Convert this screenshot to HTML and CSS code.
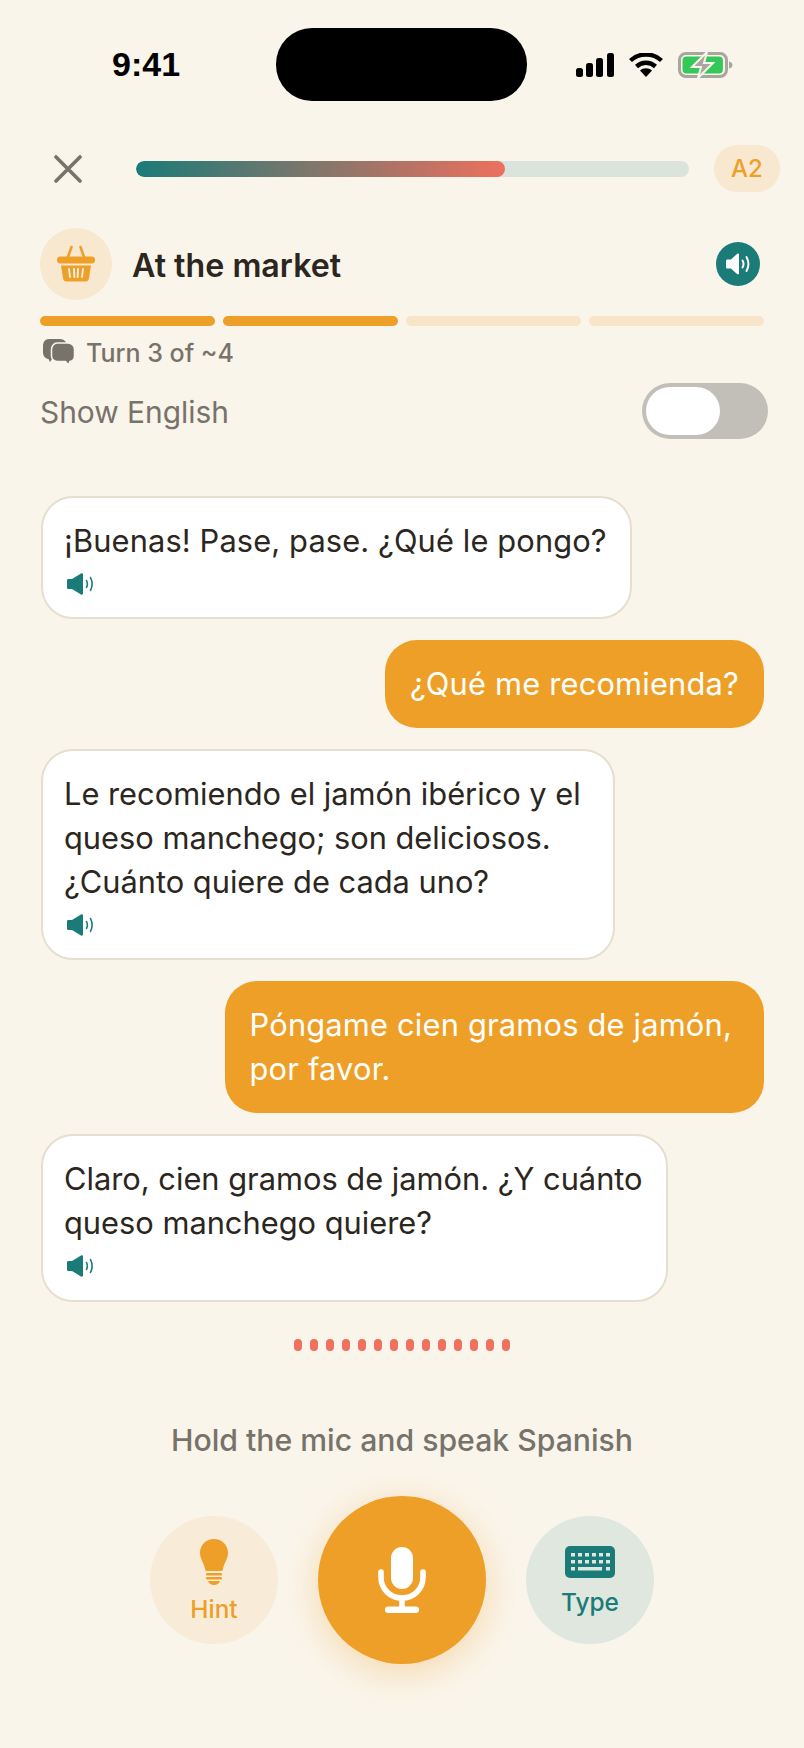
FILE: index.html
```html
<!DOCTYPE html>
<html lang="en">

<head>
    <meta charset="UTF-8">
    <meta name="viewport" content="width=device-width, initial-scale=1.0">
    <title>At the market</title>
    <link rel="stylesheet" href="styles.css">
</head>

<body>
    <div class="screen">

        <!-- status bar -->
        <div class="status">
            <span class="time">9:41</span>
            <div class="island"></div>
            <div class="status-icons">
                <svg width="38" height="24" viewBox="0 0 38 24">
                    <rect x="0" y="15" width="7" height="9" rx="2.5" />
                    <rect x="10" y="10" width="7" height="14" rx="2.5" />
                    <rect x="20" y="5" width="7" height="19" rx="2.5" />
                    <rect x="31" y="0" width="7" height="24" rx="2.5" />
                </svg>
                <svg width="34" height="24" viewBox="0 0 34 24">
                    <path d="M1.5 7.5C10 -0.5 24 -0.5 32.5 7.5" fill="none" stroke="#000" stroke-width="4.4" />
                    <path d="M7.5 13.5C13 8.5 21 8.5 26.5 13.5" fill="none" stroke="#000" stroke-width="4.4" />
                    <path d="M11 17.5C14.5 14.5 19.5 14.5 23 17.5L17 24Z" />
                </svg>
                <svg width="55" height="26" viewBox="0 0 55 26">
                    <rect x="1.5" y="1.5" width="47" height="23" rx="6.5" fill="none" stroke="#a9a6a0" stroke-width="3" />
                    <path d="M51 9.5C53.500 10 54.500 11.500 54.500 13S53.500 16 51 16.500Z" fill="#a9a6a0" />
                    <rect x="4.500" y="4.500" width="40.400" height="17" rx="4" fill="#34c759" />
                    <path d="M29 0 14 15H23L20 26 35 11H26Z" fill="#a9a6a0" stroke="#faf5eb" stroke-width="2" />
                </svg>
            </div>
        </div>

        <!-- lesson progress -->
        <div class="topbar">
            <svg class="close" width="28" height="28" viewBox="0 0 28 28">
                <path d="M2 2 26 26M26 2 2 26" fill="none" stroke="#77726a" stroke-width="3.600" stroke-linecap="round" />
            </svg>
            <div class="progress">
                <div class="progress-fill"></div>
            </div>
            <div class="level">A2</div>
        </div>

        <!-- scenario -->
        <div class="scene">
            <div class="scene-icon">
                <svg width="40" height="38" viewBox="0 0 40 38">
                    <path d="M11 15 15.500 2M29 15 24.500 2" fill="none" stroke="#ee9f27" stroke-width="2.600" stroke-linecap="round" />
                    <rect x="1" y="11.500" width="38" height="7" rx="3.500" fill="#ee9f27" />
                    <path d="M5 20.500H35L32.800 34C32.500 35.500 31.500 36.500 30 36.500H10C8.500 36.500 7.500 35.500 7.200 34Z" fill="#ee9f27" />
                    <path d="M13 24 14 32M18 24 18.400 32M22 24 21.600 32M27 24 26 32" fill="none" stroke="#faf5eb" stroke-width="1.800" stroke-linecap="round" />
                </svg>
            </div>
            <div class="scene-title">At the market</div>
            <div class="scene-sound">
                <svg width="25" height="22" viewBox="0 0 25 22">
                    <path d="M0 8C0 7 .7 6.500 1.500 6.500H5L11 1C12 .2 13 .7 13 2V20C13 21.300 12 21.800 11 21L5 15.500H1.500C.7 15.500 0 15 0 14Z" fill="#fff" />
                    <path d="M16.500 7.500C17.700 9.500 17.700 12.500 16.500 14.500M20.500 4C23 8.500 23 13.500 20.500 18" fill="none" stroke="#fff" stroke-width="2" stroke-linecap="round" />
                </svg>
            </div>
        </div>

        <div class="turns">
            <div class="turn turn-done"></div>
            <div class="turn turn-done"></div>
            <div class="turn"></div>
            <div class="turn"></div>
        </div>

        <div class="turn-label">
            <svg width="33" height="26" viewBox="0 0 33 26">
                <path d="M7 0H18C22 0 25 3 25 7V13C25 17 22 20 18 20H10L8 23 6.500 20C3 19.500 1 17 1 13V7C1 3 3 0 7 0Z" fill="#77726a" />
                <path d="M15 4H26C30 4 32.500 7 32.500 10.500V17C32.500 20.500 30.500 22 28 22.500L26.500 26 23.500 22.500H15C12 22.500 9.500 20 9.500 17V10.500C9.500 7 12 4 15 4Z" fill="#77726a" stroke="#faf5eb" stroke-width="1.500" />
            </svg>
            <span>Turn 3 of ~4</span>
        </div>

        <div class="english">
            <span>Show English</span>
            <div class="toggle">
                <div class="toggle-knob"></div>
            </div>
        </div>

        <!-- conversation -->
        <div class="chat">
            <div class="bubble bubble-bot bubble-first">
                <p>¡Buenas! Pase, pase. ¿Qué le pongo?</p>
                <svg class="bubble-sound" width="28" height="22" viewBox="0 0 28 22">
                    <path d="M1 7.500C1 6.500 1.500 6 2.500 6H6L15 .5C16 0 17 .5 17 1.500V20.500C17 21.500 16 22 15 21.500L6 16H2.500C1.500 16 1 15.500 1 14.500Z" fill="#1a7b78" />
                    <path d="M20.500 7.500C21.500 9.500 21.500 12.500 20.500 14.500M24.500 4.500C26.500 8.500 26.500 13.500 24.500 17.500" fill="none" stroke="#1a7b78" stroke-width="1.600" stroke-linecap="round" />
                </svg>
            </div>

            <div class="bubble bubble-user">
                <p>¿Qué me recomienda?</p>
            </div>

            <div class="bubble bubble-bot bubble-wrapped">
                <p>Le recomiendo el jamón ibérico y el<br>queso manchego; son deliciosos.<br>¿Cuánto quiere de cada uno?</p>
                <svg class="bubble-sound" width="28" height="22" viewBox="0 0 28 22">
                    <path d="M1 7.500C1 6.500 1.500 6 2.500 6H6L15 .5C16 0 17 .5 17 1.500V20.500C17 21.500 16 22 15 21.500L6 16H2.500C1.500 16 1 15.500 1 14.500Z" fill="#1a7b78" />
                    <path d="M20.500 7.500C21.500 9.500 21.500 12.500 20.500 14.500M24.500 4.500C26.500 8.500 26.500 13.500 24.500 17.500" fill="none" stroke="#1a7b78" stroke-width="1.600" stroke-linecap="round" />
                </svg>
            </div>

            <div class="bubble bubble-user bubble-wrapped">
                <p>Póngame cien gramos de jamón,<br>por favor.</p>
            </div>

            <div class="bubble bubble-bot bubble-last">
                <p>Claro, cien gramos de jamón. ¿Y cuánto<br>queso manchego quiere?</p>
                <svg class="bubble-sound" width="28" height="22" viewBox="0 0 28 22">
                    <path d="M1 7.500C1 6.500 1.500 6 2.500 6H6L15 .5C16 0 17 .5 17 1.500V20.500C17 21.500 16 22 15 21.500L6 16H2.500C1.500 16 1 15.500 1 14.500Z" fill="#1a7b78" />
                    <path d="M20.500 7.500C21.500 9.500 21.500 12.500 20.500 14.500M24.500 4.500C26.500 8.500 26.500 13.500 24.500 17.500" fill="none" stroke="#1a7b78" stroke-width="1.600" stroke-linecap="round" />
                </svg>
            </div>
        </div>

        <div class="dots">
            <i></i><i></i><i></i><i></i><i></i><i></i><i></i><i></i><i></i><i></i><i></i><i></i><i></i><i></i>
        </div>

        <div class="speak-hint">Hold the mic and speak Spanish</div>

        <!-- controls -->
        <div class="controls">
            <div class="side-btn side-hint">
                <svg width="28" height="46" viewBox="0 0 28 46">
                    <path d="M14 0C6 0 0 6 0 14C0 20 4 24 5 30C5.300 31.500 6 32 7 32H21C22 32 22.700 31.500 23 30C24 24 28 20 28 14C28 6 22 0 14 0Z" fill="#ee9f27" />
                    <rect x="6" y="34" width="16" height="2.500" rx="1.200" fill="#ee9f27" />
                    <rect x="6" y="38" width="16" height="2.500" rx="1.200" fill="#ee9f27" />
                    <path d="M8 42H20C19 44.500 17 46 14 46S9 44.500 8 42Z" fill="#ee9f27" />
                </svg>
                <span>Hint</span>
            </div>

            <div class="mic-btn">
                <svg width="48" height="66" viewBox="0 0 48 66">
                    <rect x="13" y="0" width="22" height="42" rx="11" fill="#fff" />
                    <path d="M3 25V30C3 42 12 51 24 51S45 42 45 30V25M24 51V61" fill="none" stroke="#fff" stroke-width="5.600" stroke-linecap="round" />
                    <rect x="7" y="59.500" width="34" height="6.500" rx="3.200" fill="#fff" />
                </svg>
            </div>

            <div class="side-btn side-type">
                <svg width="50" height="32" viewBox="0 0 50 32">
                    <rect width="50" height="32" rx="5" fill="#1a7b78" />
                    <g fill="#dfe7df">
                        <rect x="6" y="7" width="4" height="3.500" /><rect x="13" y="7" width="4" height="3.500" /><rect x="20" y="7" width="4" height="3.500" /><rect x="27" y="7" width="4" height="3.500" /><rect x="34" y="7" width="4" height="3.500" /><rect x="41" y="7" width="4" height="3.500" />
                        <rect x="6" y="14" width="4" height="3.500" /><rect x="13" y="14" width="4" height="3.500" /><rect x="20" y="14" width="4" height="3.500" /><rect x="27" y="14" width="4" height="3.500" /><rect x="34" y="14" width="4" height="3.500" /><rect x="41" y="14" width="4" height="3.500" />
                        <rect x="6" y="21" width="4" height="3.500" /><rect x="13" y="21" width="24" height="3.500" /><rect x="41" y="21" width="4" height="3.500" />
                    </g>
                </svg>
                <span>Type</span>
            </div>
        </div>

    </div>
</body>

</html>
```

FILE: styles.css
```css
* {
    padding: 0;
    margin: 0;
    box-sizing: border-box;
}

body {
    background-color: #faf5eb;
    font-family: "Inter", "Liberation Sans", sans-serif;
    color: #2b2620;
}

.screen {
    width: 804px;
    height: 1748px;
    padding: 0 40px;
    overflow: hidden;
}

.status {
    height: 145px;
    padding-top: 28px;
    margin: 0 -40px;
    display: flex;
    align-items: flex-start;
}

.time {
    width: 276px;
    padding: 17px 0 0 112px;
    font-family: "Liberation Sans", sans-serif;
    font-size: 34px;
    font-weight: 700;
    line-height: 38px;
    color: #000;
}

.island {
    width: 251px;
    height: 73px;
    border-radius: 36px;
    background-color: #000;
}

.status-icons {
    padding: 24px 0 0 49px;
    display: flex;
    align-items: center;
    gap: 15px;
}

.topbar {
    height: 47px;
    margin-right: -16px;
    display: flex;
    align-items: center;
}

.close {
    margin-left: 14px;
    margin-right: 54px;
    flex-shrink: 0;
}

.progress {
    width: 553px;
    height: 16px;
    border-radius: 8px;
    background-color: #dbe4dc;
    overflow: hidden;
}

.progress-fill {
    width: 369px;
    height: 100%;
    border-radius: 8px;
    background: linear-gradient(90deg, #1a7b78, #ee705e);
}

.level {
    width: 66px;
    height: 47px;
    margin-left: 25px;
    border-radius: 23px;
    background-color: #f8e8d0;
    color: #ee9f27;
    font-size: 24px;
    font-weight: 500;
    line-height: 47px;
    text-align: center;
}

.scene {
    height: 72px;
    margin-top: 36px;
    display: flex;
    align-items: center;
}

.scene-icon {
    width: 72px;
    height: 72px;
    border-radius: 50%;
    background-color: #f8e8d0;
    display: flex;
    align-items: center;
    justify-content: center;
}

.scene-title {
    margin-left: 20px;
    padding-top: 2px;
    font-size: 32.2px;
    font-weight: 600;
    flex: 1;
}

.scene-sound {
    width: 44px;
    height: 44px;
    margin-right: 4px;
    border-radius: 50%;
    background-color: #1a7b78;
    display: flex;
    align-items: center;
    justify-content: center;
}

.turns {
    margin-top: 16px;
    display: flex;
    gap: 8px;
}

.turn {
    height: 10px;
    flex: 1;
    border-radius: 5px;
    background-color: #f8e4c8;
}

.turn-done {
    background-color: #ee9f27;
}

.turn-label {
    height: 26px;
    margin-top: 13px;
    padding-left: 2px;
    display: flex;
    align-items: center;
    gap: 11px;
    color: #77726a;
    font-size: 25px;
    font-weight: 500;
}

.turn-label span {
    padding-top: 1px;
}

.english {
    height: 56px;
    margin-top: 18px;
    margin-right: -4px;
    display: flex;
    align-items: center;
    justify-content: space-between;
    color: #77726a;
    font-size: 29.9px;
}

.english span {
    padding-top: 2px;
}

.toggle {
    width: 126px;
    height: 56px;
    padding: 4px;
    border-radius: 28px;
    background-color: #c2bfb9;
}

.toggle-knob {
    width: 74px;
    height: 48px;
    border-radius: 24px;
    background-color: #fff;
}

.chat {
    margin-top: 57px;
    display: flex;
    flex-direction: column;
    align-items: flex-start;
    gap: 21px;
}

.bubble {
    padding: 21px 23px 22px 21px;
    border-radius: 32px;
    font-size: 30.8px;
    line-height: 44px;
}

.bubble p {
    white-space: nowrap;
}

.bubble-bot {
    margin-left: 1px;
    border: 2px solid #e6dfcf;
    background-color: #fff;
}

.bubble-first {
    letter-spacing: .13px;
}

.bubble-last {
    padding-bottom: 23px;
}

.bubble-user {
    padding: 22px 25px;
    align-self: flex-end;
    background-color: #ee9f27;
    color: #fff;
    letter-spacing: .2px;
}

/* these two wrapped in the original, so the box is wider than the longest line */
.bubble-wrapped {
    padding-right: 32px;
}

.bubble-sound {
    display: block;
    margin-top: 10px;
    margin-left: 2px;
}

.dots {
    margin-top: 37px;
    display: flex;
    justify-content: center;
    gap: 8px;
}

.dots i {
    width: 8px;
    height: 12px;
    border-radius: 4px;
    background-color: #ee705e;
}

.speak-hint {
    margin-top: 71px;
    color: #77726a;
    font-size: 30.2px;
    font-weight: 500;
    line-height: 36px;
    text-align: center;
}

.controls {
    margin-top: 38px;
    display: flex;
    align-items: center;
    justify-content: center;
    gap: 40px;
}

.side-btn {
    width: 128px;
    height: 128px;
    border-radius: 50%;
    display: flex;
    flex-direction: column;
    align-items: center;
    font-size: 24.4px;
    font-weight: 500;
}

.side-btn span {
    margin-top: 9px;
    line-height: 30px;
}

.side-hint {
    padding-top: 23px;
    background-color: #f8ecd8;
    color: #ee9f27;
}

.side-type {
    padding-top: 30px;
    background-color: #dfe7df;
    color: #1a7b78;
}

.mic-btn {
    width: 168px;
    height: 168px;
    border-radius: 50%;
    background-color: #ee9f27;
    box-shadow: 0 8px 36px rgba(238, 159, 39, 0.32);
    display: flex;
    align-items: center;
    justify-content: center;
}
```
